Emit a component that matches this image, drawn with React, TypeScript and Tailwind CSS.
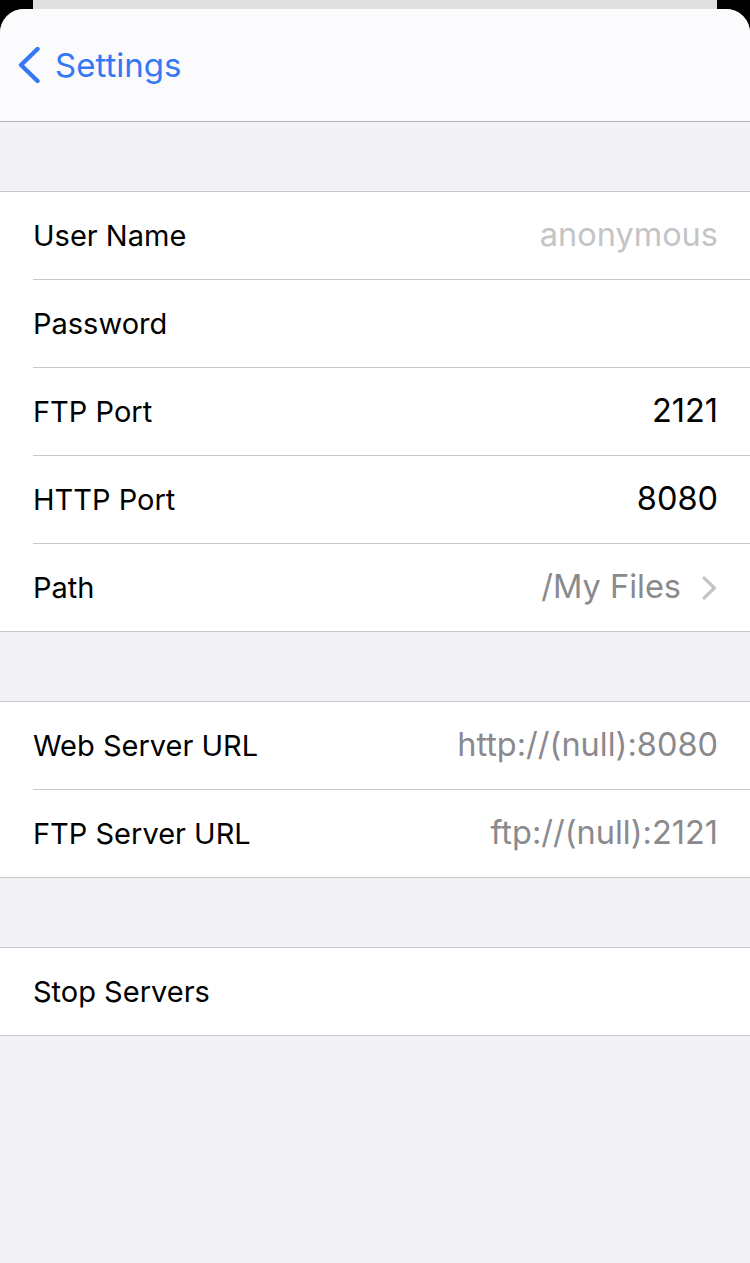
import { ReactNode } from "react";

type Row = {
  label: string;
  value?: string;
  tone?: "placeholder" | "plain" | "muted";
  chevron?: boolean;
};

const groups: Row[][] = [
  [
    { label: "User Name", value: "anonymous", tone: "placeholder" },
    { label: "Password" },
    { label: "FTP Port", value: "2121", tone: "plain" },
    { label: "HTTP Port", value: "8080", tone: "plain" },
    { label: "Path", value: "/My Files", tone: "muted", chevron: true },
  ],
  [
    { label: "Web Server URL", value: "http://(null):8080", tone: "muted" },
    { label: "FTP Server URL", value: "ftp://(null):2121", tone: "muted" },
  ],
  [{ label: "Stop Servers" }],
];

function toneClass(tone?: Row["tone"]) {
  if (tone === "placeholder") return "text-[#c4c4c7]";
  if (tone === "muted") return "text-[#8a8a8e]";
  return "text-black";
}

function Chevron() {
  return (
    <svg width="17" height="26" viewBox="0 0 17 26" className="ml-[20px] shrink-0">
      <path
        d="M3 3 L13.5 13 L3 23"
        fill="none"
        stroke="#c4c4c7"
        strokeWidth="3.2"
        strokeLinecap="round"
        strokeLinejoin="round"
      />
    </svg>
  );
}

function Group({ children }: { children: ReactNode }) {
  return <div className="mt-[69px] bg-white border-y border-[#c8c7cc]">{children}</div>;
}

export default function App() {
  return (
    <div
      className="flex flex-col h-[1263px] bg-black"
      style={{ fontFamily: "Inter, 'Liberation Sans', sans-serif" }}
    >
      <div className="h-[9px] px-[33px] shrink-0">
        <div className="h-full bg-[#e0e0e0]" />
      </div>
      <div className="flex-1 flex flex-col rounded-t-[24px] overflow-hidden bg-[#f2f2f7]">
        <header className="h-[113px] shrink-0 flex items-center bg-[#fbfbfd] border-b border-[#b2b2b4]">
          <div className="flex items-center pl-[17px] text-[#3478f6]">
            <svg width="24" height="38" viewBox="0 0 24 38">
              <path
                d="M20.5 3 L4 19 L20.5 35"
                fill="none"
                stroke="#3478f6"
                strokeWidth="4.4"
                strokeLinecap="round"
                strokeLinejoin="round"
              />
            </svg>
            <span className="ml-[14px] text-[33px] leading-none">Settings</span>
          </div>
        </header>

        {groups.map((rows, gi) => (
          <Group key={gi}>
            {rows.map((row, i) => {
              const last = i === rows.length - 1;
              return (
                <div key={row.label} className="pl-[33px]">
                  <div
                    className={
                      last
                        ? "flex items-center h-[87px] pr-[32px]"
                        : "flex items-center h-[88px] pr-[32px] border-b border-[#c8c7cc]"
                    }
                  >
                    <span className="text-black text-[29px]">{row.label}</span>
                    <span className="flex-1" />
                    {row.value && (
                      <span className={"text-[32.5px] " + toneClass(row.tone)}>{row.value}</span>
                    )}
                    {row.chevron && <Chevron />}
                  </div>
                </div>
              );
            })}
          </Group>
        ))}
      </div>
    </div>
  );
}
